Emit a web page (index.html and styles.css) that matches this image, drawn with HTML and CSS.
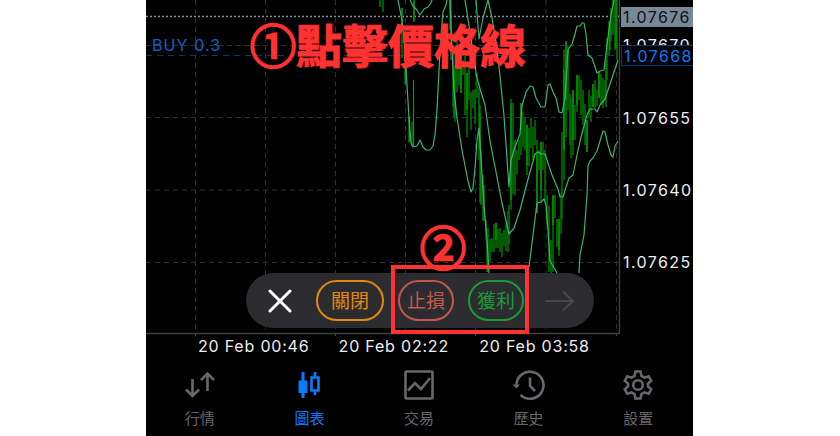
FILE: index.html
```html
<!DOCTYPE html>
<html lang="zh-Hant">
<head>
    <meta charset="UTF-8">
    <meta name="viewport" content="width=device-width, initial-scale=1.0">
    <title>圖表</title>
    <link rel="stylesheet" href="styles.css">
</head>
<body>
    <div class="phone">
        <main class="chart">
            <svg class="plot" viewBox="146 0 547 336">
                <!-- Grid -->
                <path class="grid" d="M195.5 0V333M265.5 0V333M335.5 0V333M405.5 0V333M475.5 0V333M546 0V333M616.5 0V333"/>
                <path class="grid" d="M146 45.5H619M146 117.5H619M146 190H619M146 262.5H619"/>
                <path class="order-line" d="M146 55.5H619"/>
                <path class="price-line" d="M146 16.5H619"/>
                <!-- Candles -->
                <path id="candles" class="candles"/>
                <path id="candles-bright" class="candles bright"/>
                <!-- Bands -->
                <g class="bands">
                    <path d="M398 0L402 20L405 50L407 85L409 118L411 143L413 147L417 146L420 140L423 147L426 150L430 150L433 146L435 135L437 110L439 70L441 35L443 12L446 5L447 0"/>
                    <path d="M410 0L413 6L417 10L420 15L424 9L428 7L431 3L432 0"/>
                    <path d="M450 0L452 50L454 90L457 118L462 150L468 181L471 192L473 188L475 168L477 140L479 128L481 158L484 205L487 240L489 273"/>
                    <path d="M465 0L470 32L474 60L477 78L481 92L485 105L490 141L496 172L502 203L509 234L514 228L520 210L527 183L535 154L538 152L541 154L545 154L548 163L552 175L558 189L560 197L563 197L566 187L569 178L573 175L577 155L581 137L587 115L590 109L595 109L597 112L600 105L605 99L610 84L618 60"/>
                    <path d="M476 0L479 39L483 18L488 0L492 18L496 42L500 76L504 116L509 187L511 160L515 147L520 134L522 106L526 92L530 86L533 87L536 98L541 107L545 107L548 85L550 84L553 92L556 98L559 112L562 113L565 98L568 50L572 44L575 34L577 26L580 26L582 23L584 23L586 34L588 55L592 58L597 73L600 71L604 70L607 45L611 15L614 0"/>
                    <path d="M529 267L533 235L537 203L541 202L544 199L546 205L548 230L550 261L553 266L557 273"/>
                    <path d="M579 273L580 255L584 235L587 195L588 166L590 161L593 158L597 151L600 141L603 131L605 132L608 145L611 155L613 157L615 146L618 141"/>
                </g>
                <!-- Axes -->
                <path class="axis" d="M619.5 0V333.5H146M195.5 333V337M335.5 333V337M475.5 333V337M616.5 333V337"/>
            </svg>

            <span class="order-label">BUY 0.3</span>
            <span class="price y-70">1.07670</span>
            <span class="price y-55">1.07655</span>
            <span class="price y-40">1.07640</span>
            <span class="price y-25">1.07625</span>
            <span class="price current">1.07676</span>
            <span class="price order">1.07668</span>

            <div class="toolbar">
                <svg class="close" viewBox="0 0 24 24"><path d="M2 2L22 22M22 2L2 22"/></svg>
                <button class="pill pill-close">關閉</button>
                <button class="pill pill-stop">止損</button>
                <button class="pill pill-profit">獲利</button>
                <svg class="next" viewBox="0 0 30 22"><path d="M0 11H28M18 1.5L28 11L18 20.5"/></svg>
            </div>
        </main>

        <div class="times">
            <span>20 Feb 00:46</span>
            <span>20 Feb 02:22</span>
            <span>20 Feb 03:58</span>
        </div>

        <nav class="tabs">
            <a class="tab">
                <svg viewBox="0 0 32 32"><path d="M8.5 10V27M2 20.5L8.5 27L15 20.5M23.5 22V4M17 11L23.5 4.500L30 11"/></svg>
                <span>行情</span>
            </a>
            <a class="tab active">
                <svg viewBox="0 0 32 32"><path class="solid" d="M5.500 11.500H8.500V3H11.500V11.500H14.500V24H11.500V29H8.500V24H5.500Z"/><path d="M22 3V8M22 22V26M18.500 8.500H25.500V21.500H18.500Z"/></svg>
                <span>圖表</span>
            </a>
            <a class="tab">
                <svg viewBox="0 0 32 32"><rect x="2.500" y="2.500" width="27" height="27" rx="1"/><path d="M5 21.500L12 14L18 20L27 9"/></svg>
                <span>交易</span>
            </a>
            <a class="tab">
                <svg viewBox="0 0 32 32"><path d="M3.500 16A13.500 13.500 0 1 1 7.500 25.800M17 8.500V17L22 22"/><path class="solid" d="M-.5 15.500H7L3.500 19.500Z"/></svg>
                <span>歷史</span>
            </a>
            <a class="tab">
                <svg viewBox="0 0 32 32"><path d="M13.500 2.500H18.500L19.500 7L22.500 8.700L26.700 7.300L29.200 11.700L26 14.500V17.500L29.200 20.300L26.700 24.700L22.500 23.300L19.500 25L18.500 29.500H13.500L12.500 25L9.500 23.300L5.300 24.700L2.800 20.300L6 17.500V14.500L2.800 11.700L5.300 7.300L9.500 8.700L12.500 7Z"/><circle cx="16" cy="16" r="4.800"/></svg>
                <span>設置</span>
            </a>
        </nav>

        <!-- Tutorial marks -->
        <div class="step step-one"><span class="num">①</span>點擊價格線</div>
        <div class="step step-two"><span class="num">②</span></div>
        <div class="highlight"></div>
    </div>
    <script>
        // x, high, low
        var bars = [
            [380, 0, 7], [383, 0, 12], [402, 8, 58], [405, 35, 84], [409, 116, 142], [412, 122, 146], [414, 0, 22],
            [450, 0, 30], [453, 45, 107], [455, 65, 122], [457, 35, 92], [459, 55, 85], [461, 50, 93], [463, 60, 75], [465, 56, 115], [467, 73, 137], [469, 65, 100], [471, 92, 130], [473, 90, 108], [475, 89, 124], [477, 73, 98], [479, 88, 160],
            [480, 113, 203], [483, 175, 221], [486, 220, 240], [488, 228, 272], [490, 239, 262], [492, 238, 252], [494, 224, 252], [496, 223, 248], [498, 229, 248], [500, 228, 252], [502, 233, 257], [504, 230, 246], [506, 223, 251], [508, 211, 252], [509, 205, 244],
            [511, 99, 210], [513, 103, 194], [515, 140, 195], [517, 150, 174], [519, 140, 160], [521, 103, 155], [523, 112, 147], [525, 118, 150], [527, 125, 175], [529, 128, 166], [531, 118, 148], [533, 127, 160], [535, 120, 145], [537, 140, 213], [539, 150, 170], [541, 142, 203], [543, 142, 170], [545, 150, 200],
            [547, 195, 225], [549, 206, 272], [551, 240, 273], [553, 195, 272], [555, 195, 218], [557, 219, 247], [559, 219, 256], [561, 194, 234], [562, 132, 219], [564, 50, 180],
            [566, 42, 137], [568, 46, 110], [570, 94, 145], [571, 98, 158], [573, 90, 155], [575, 105, 140], [577, 75, 112], [579, 75, 100], [581, 80, 115], [583, 90, 125], [585, 104, 145], [587, 120, 152], [589, 90, 118], [591, 96, 122], [593, 84, 107], [595, 80, 108], [597, 90, 106], [599, 72, 98], [601, 74, 104], [603, 78, 108], [605, 80, 100], [607, 38, 80], [609, 21, 55], [611, 8, 41], [613, 0, 35], [615, 0, 50], [617, 0, 60]
        ];
        var bright = [
            [402, 8, 30], [405.5, 45, 84], [413.5, 80, 146], [409.5, 118, 142], [414, 0, 22], [451, 0, 60], [481, 150, 205], [484, 185, 221], [487, 240, 272], [454, 70, 117], [461, 50, 93], [467, 73, 110], [480, 105, 150], [496, 223, 240], [511, 103, 200], [521, 103, 130], [527, 125, 165], [541, 142, 190], [566, 41, 100], [553, 195, 225], [559, 219, 250], [537, 155, 213], [564, 70, 150], [573, 90, 140], [577, 75, 105], [587, 120, 152], [593, 84, 107], [599, 72, 98], [610, 21, 50], [616, 0, 48], [606, 60, 107]
        ];

        function barPath(list) {
            return list.map(function (b) {
                return 'M' + b[0] + ' ' + b[1] + 'V' + b[2];
            }).join('');
        }

        document.getElementById('candles').setAttribute('d', barPath(bars));
        document.getElementById('candles-bright').setAttribute('d', barPath(bright));
    </script>
</body>
</html>
```
FILE: styles.css
```css
body {
    margin: 0;
    background: #fff;
    font-family: Inter, "Noto Sans CJK TC", sans-serif;
}

.phone {
    position: relative;
    width: 547px;
    height: 436px;
    margin-left: 146px;
    background: #000;
    overflow: hidden;
}

/* Chart */
.chart {
    position: relative;
    height: 336px;
}

.plot {
    display: block;
    width: 547px;
    height: 336px;
    fill: none;
}

.grid {
    stroke: #303030;
    stroke-dasharray: 5 4;
}

.order-line {
    stroke: #0b3768;
    stroke-dasharray: 6 5;
}

.price-line {
    stroke: #8290a0;
    stroke-width: 1.5;
    stroke-dasharray: 2 2;
}

.candles {
    stroke: #006a00;
    stroke-width: 1.7;
}

.candles.bright {
    stroke: #079a07;
    stroke-width: 1.2;
}

.bands {
    stroke: #3cb371;
    stroke-width: 1.2;
    stroke-linejoin: round;
}

.axis {
    stroke: #414143;
    stroke-width: 1.3;
}

.order-label {
    position: absolute;
    left: 6px;
    top: 35px;
    font-size: 16px;
    line-height: 20px;
    letter-spacing: 1.1px;
    color: #0864cd;
}

.price {
    position: absolute;
    left: 475px;
    width: 72px;
    height: 20px;
    box-sizing: border-box;
    padding-left: 2px;
    font-size: 16px;
    line-height: 20px;
    letter-spacing: 1.4px;
    color: #eee;
}

.y-70 { top: 35px; }
.y-55 { top: 108px; }
.y-40 { top: 180px; }
.y-25 { top: 252px; }

.price.current {
    top: 7px;
    background: #778899;
    color: #111;
}

.price.order {
    top: 45px;
    height: 21px;
    border: 1px solid #003b78;
    border-right: 0;
    background: #000;
    color: #087bff;
}

/* Order toolbar */
.toolbar {
    position: absolute;
    left: 100px;
    top: 273px;
    display: flex;
    align-items: center;
    width: 348px;
    height: 55px;
    box-sizing: border-box;
    padding-left: 22px;
    border-radius: 28px;
    background: #2c2c30;
}

.close {
    width: 24px;
    height: 24px;
    margin-right: 24px;
    stroke: #fff;
    stroke-width: 3;
    stroke-linecap: round;
}

.pill {
    width: 56px;
    height: 41px;
    margin: 0 14px 0 0;
    padding: 0 0 3px;
    border: 2px solid;
    border-radius: 21px;
    background: none;
    font-family: "Noto Sans CJK TC", sans-serif;
    font-size: 19px;
}

.pill-close {
    width: 68px;
    color: #e08a0c;
}

.pill-stop {
    color: #c4584f;
}

.pill-profit {
    margin-right: 21px;
    color: #179c33;
}

.next {
    width: 30px;
    height: 22px;
    fill: none;
    stroke: #48484b;
    stroke-width: 2;
}

/* Time axis */
.times {
    display: flex;
    height: 20px;
    padding-left: 52px;
    font-size: 16px;
    line-height: 20px;
    letter-spacing: 0.8px;
    color: #eee;
}

.times span {
    width: 140.6px;
    white-space: nowrap;
}

/* Tab bar */
.tabs {
    display: flex;
    margin-left: -1px;
    padding-top: 13px;
}

.tab {
    display: flex;
    flex: 1;
    flex-direction: column;
    align-items: center;
    font-size: 15px;
    line-height: 20px;
    color: #68686a;
}

.tab svg {
    width: 32px;
    height: 32px;
    margin-bottom: 8px;
    fill: none;
    stroke: currentColor;
    stroke-width: 2.6;
    overflow: visible;
}

.tab .solid {
    fill: currentColor;
    stroke: none;
}

.tab.active {
    color: #087bff;
}

/* Tutorial marks */
.step {
    position: absolute;
    color: #ff3131;
    font-family: "Noto Sans CJK TC", sans-serif;
    font-size: 46px;
    font-weight: 700;
    line-height: 60px;
    white-space: nowrap;
    -webkit-text-stroke: 1px #ff3131;
}

.num {
    font-weight: 400;
    -webkit-text-stroke: 2.4px #ff3131;
}

.step-one {
    left: 104px;
    top: 13px;
}

.step-two {
    left: 274px;
    top: 215px;
}

.highlight {
    position: absolute;
    left: 245px;
    top: 265px;
    width: 138px;
    height: 69px;
    box-sizing: border-box;
    border: 4px solid #ff3131;
}
```
